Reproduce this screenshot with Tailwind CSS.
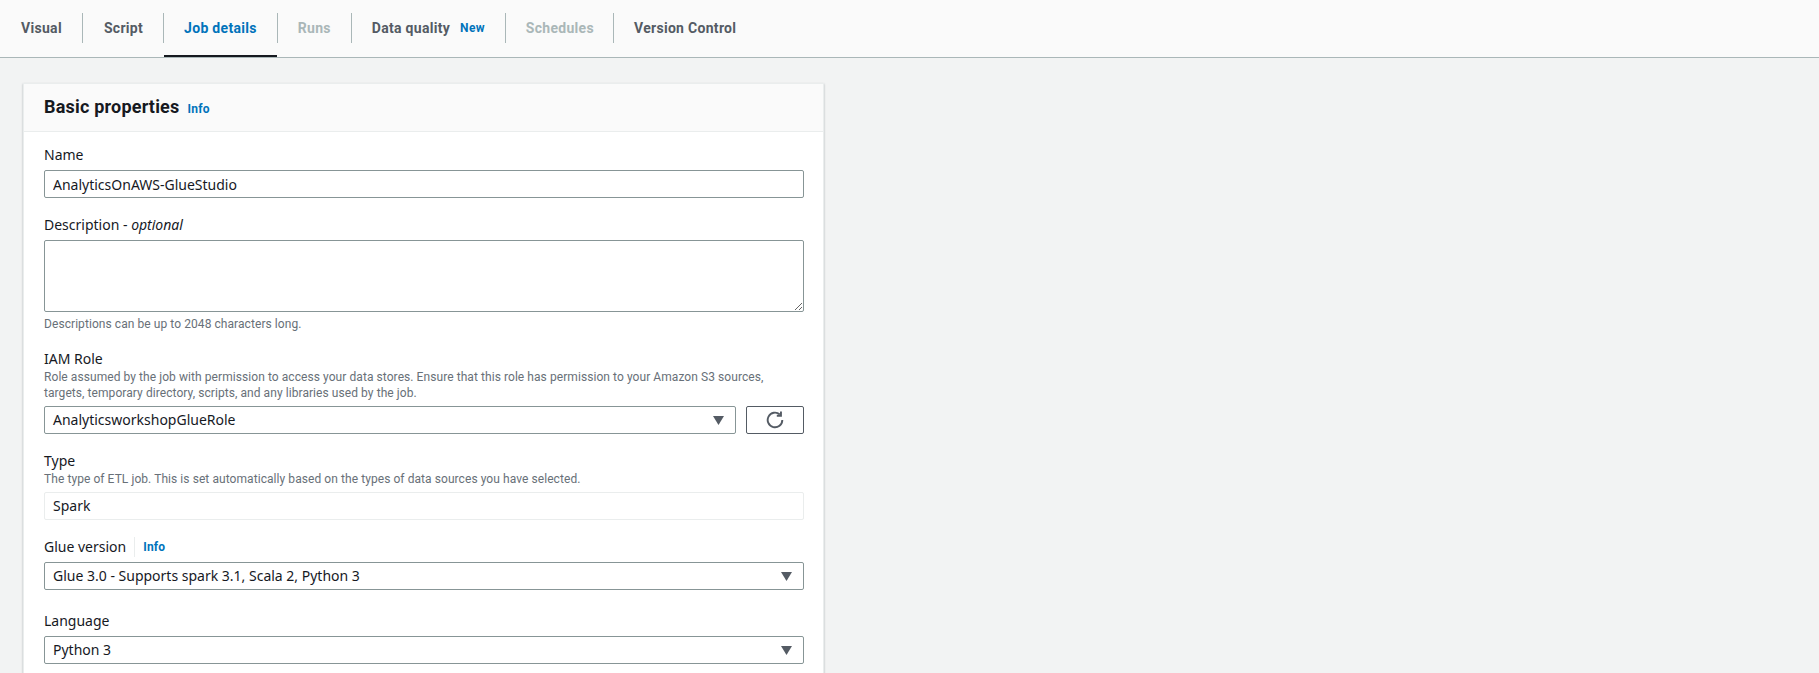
<!DOCTYPE html>
<html lang="en">
<head>
    <meta charset="UTF-8">
    <title>Job details</title>
    <script src="https://cdn.jsdelivr.net/npm/@tailwindcss/browser@4"></script>
</head>
<body class="h-[673px] overflow-hidden bg-[#f2f3f3] font-['Noto_Sans',sans-serif] text-[14px] leading-[20px] text-[#16191f]">

<!-- Tabs -->
<div class="flex h-[58px] items-start border-b border-[#aab7b8] bg-[#fafafa] pt-[13px] font-['Roboto',sans-serif] text-[14px] font-bold tracking-[0.3px] text-[#545b64]">
    <div class="flex h-[30px] items-center border-r border-[#aab7b8] pl-[21px] pr-[20px]">Visual</div>
    <div class="flex h-[30px] items-center border-r border-[#aab7b8] pl-[21px] pr-[20px]">Script</div>
    <div class="relative flex h-[30px] items-center border-r border-[#aab7b8] px-[20px] text-[#0073bb]">
        Job details
        <span class="absolute -bottom-[14px] left-0 right-0 h-[2px] bg-[#16191f]"></span>
    </div>
    <div class="flex h-[30px] items-center border-r border-[#aab7b8] px-[20px] text-[#aab7b8]">Runs</div>
    <div class="flex h-[30px] items-center gap-[10px] border-r border-[#aab7b8] px-[20px]">Data quality <span class="text-[12px] text-[#0073bb]">New</span></div>
    <div class="flex h-[30px] items-center border-r border-[#aab7b8] pl-[20px] pr-[19px] text-[#aab7b8]">Schedules</div>
    <div class="flex h-[30px] items-center px-[20px]">Version Control</div>
</div>

<!-- Basic properties card -->
<div class="ml-[23px] mt-[25px] w-[801px] border-x border-t border-[#eaeded] bg-white shadow-[0_1px_2px_rgba(0,28,36,0.3)]">
    <div class="flex h-[48px] items-center gap-2 border-b border-[#eaeded] bg-[#fafafa] px-[20px]">
        <h2 class="mb-[2px] font-['Roboto',sans-serif] text-[18px] font-bold tracking-[0.2px]">Basic properties</h2>
        <a class="mt-[2px] font-['Roboto',sans-serif] text-[12px] font-bold tracking-[0.2px] text-[#0073bb]">Info</a>
    </div>

    <div class="flex flex-col pl-[20px] pr-[19px] pt-[13px]">
        <label class="block">Name</label>
        <input class="mt-[5px] h-[28px] w-full rounded-[2px] border border-[#879596] px-[8px]" value="AnalyticsOnAWS-GlueStudio">

        <label class="mt-[17px] block">Description - <i>optional</i></label>
        <textarea class="mt-[5px] block h-[72px] w-full rounded-[2px] border border-[#879596] px-[8px]"></textarea>
        <p class="mt-[2px] font-['Roboto',sans-serif] text-[12px] leading-[20px] tracking-[0.07px] text-[#687078]">Descriptions can be up to 2048 characters long.</p>

        <label class="mt-[15px] block">IAM Role</label>
        <p class="font-['Roboto',sans-serif] text-[12px] leading-[16px] tracking-[0.07px] text-[#687078]">Role assumed by the job with permission to access your data stores. Ensure that this role has permission to your Amazon S3 sources,<br>targets, temporary directory, scripts, and any libraries used by the job.</p>
        <div class="mt-[5px] flex gap-[10px]">
            <div class="flex h-[28px] flex-1 items-center justify-between rounded-[2px] border border-[#879596] pl-[8px] pr-[11px]">
                AnalyticsworkshopGlueRole
                <svg class="h-[10px] w-[11px]" viewBox="0 0 11 10"><path d="M0 1h11L5.500 10z" fill="#545b64"/></svg>
            </div>
            <div class="flex h-[28px] w-[58px] items-center justify-center rounded-[2px] border border-[#545b64]">
                <svg class="h-[18px] w-[18px]" viewBox="0 0 16 16" fill="none" stroke="#545b64" stroke-width="1.700"><path d="M14.500 8a6.500 6.500 0 1 1-2.200-4.900"/><path d="M13.300 0.500V4.200H9.600"/></svg>
            </div>
        </div>

        <label class="mt-[17px] block">Type</label>
        <p class="font-['Roboto',sans-serif] text-[12px] leading-[16px] tracking-[0.07px] text-[#687078]">The type of ETL job. This is set automatically based on the types of data sources you have selected.</p>
        <div class="mt-[5px] flex h-[28px] items-center rounded-[2px] border border-[#eaeded] px-[8px]">Spark</div>

        <div class="mt-[17px] flex items-center">
            <label class="border-r border-[#eaeded] pr-[8px]">Glue version</label>
            <a class="pl-[8px] font-['Roboto',sans-serif] text-[12px] font-bold tracking-[0.2px] text-[#0073bb]">Info</a>
        </div>
        <div class="mt-[5px] flex h-[28px] items-center justify-between rounded-[2px] border border-[#879596] pl-[8px] pr-[11px]">
            Glue 3.0 - Supports spark 3.1, Scala 2, Python 3
            <svg class="h-[10px] w-[11px]" viewBox="0 0 11 10"><path d="M0 1h11L5.500 10z" fill="#545b64"/></svg>
        </div>

        <label class="mt-[21px] block">Language</label>
        <div class="mt-[5px] flex h-[28px] items-center justify-between rounded-[2px] border border-[#879596] pl-[8px] pr-[11px]">
            Python 3
            <svg class="h-[10px] w-[11px]" viewBox="0 0 11 10"><path d="M0 1h11L5.500 10z" fill="#545b64"/></svg>
        </div>
        <div class="h-[40px]"></div>
    </div>
</div>

</body>
</html>
